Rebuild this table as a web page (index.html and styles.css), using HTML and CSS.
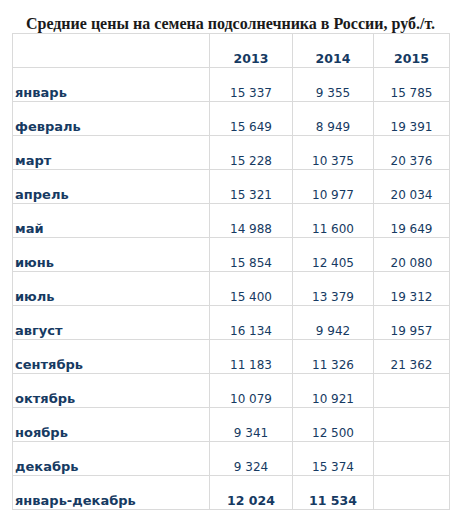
FILE: index.html
```html
<!DOCTYPE html>
<html lang="ru">
<head>
<meta charset="utf-8">
<link rel="stylesheet" href="styles.css">
</head>
<body>
<div class="page">
  <div class="title">Средние цены на семена подсолнечника в России, руб./т.</div>
  <table class="prices">
    <colgroup>
      <col class="c-month"><col class="c-y1"><col class="c-y2"><col class="c-y3">
    </colgroup>
    <thead>
      <tr><th></th><th>2013</th><th>2014</th><th>2015</th></tr>
    </thead>
    <tbody>
      <tr><td class="m">январь</td><td>15 337</td><td>9 355</td><td>15 785</td></tr>
      <tr><td class="m">февраль</td><td>15 649</td><td>8 949</td><td>19 391</td></tr>
      <tr><td class="m">март</td><td>15 228</td><td>10 375</td><td>20 376</td></tr>
      <tr><td class="m">апрель</td><td>15 321</td><td>10 977</td><td>20 034</td></tr>
      <tr><td class="m">май</td><td>14 988</td><td>11 600</td><td>19 649</td></tr>
      <tr><td class="m">июнь</td><td>15 854</td><td>12 405</td><td>20 080</td></tr>
      <tr><td class="m">июль</td><td>15 400</td><td>13 379</td><td>19 312</td></tr>
      <tr><td class="m">август</td><td>16 134</td><td>9 942</td><td>19 957</td></tr>
      <tr><td class="m">сентябрь</td><td>11 183</td><td>11 326</td><td>21 362</td></tr>
      <tr><td class="m">октябрь</td><td>10 079</td><td>10 921</td><td></td></tr>
      <tr><td class="m">ноябрь</td><td>9 341</td><td>12 500</td><td></td></tr>
      <tr><td class="m">декабрь</td><td>9 324</td><td>15 374</td><td></td></tr>
      <tr class="total"><td class="m">январь-декабрь</td><td>12 024</td><td>11 534</td><td></td></tr>
    </tbody>
  </table>
</div>
</body>
</html>
```
FILE: styles.css
```css
html, body {
  margin: 0;
  padding: 0;
  background: #ffffff;
}
.page {
  padding: 0 0 0 12px;
  width: 437px;
}
.title {
  font-family: "Liberation Serif", serif;
  font-weight: bold;
  font-size: 16px;
  line-height: 19px;
  padding-top: 14px;
  color: #1a1a1a;
  text-align: center;
  white-space: nowrap;
}
.prices {
  border-collapse: collapse;
  table-layout: fixed;
  width: 437px;
  font-family: "DejaVu Sans", Verdana, sans-serif;
  font-size: 12px;
  color: #163a62;
}
.c-month { width: 197px; }
.c-y1 { width: 83px; }
.c-y2 { width: 81px; }
.c-y3 { width: 76px; }
.prices th,
.prices td {
  border: 1px solid #dadada;
  height: 34px;
  padding: 0 2px 1px 2px;
  vertical-align: bottom;
  text-align: center;
  line-height: 14px;
  box-sizing: border-box;
}
.prices th {
  font-weight: bold;
  font-size: 12.5px;
}
.prices td.m {
  text-align: left;
  font-weight: bold;
  font-size: 13px;
}
.prices tr.total td {
  font-weight: bold;
  font-size: 12.5px;
}
.prices tr.total td.m {
  font-size: 13px;
}
```
